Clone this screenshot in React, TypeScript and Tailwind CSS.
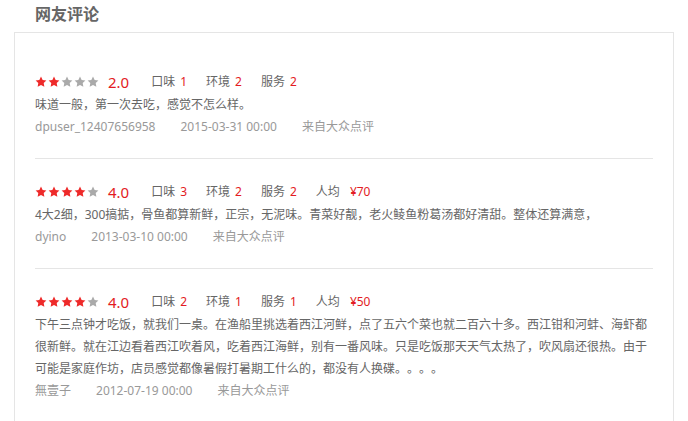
const REVIEWS = [
  {
    stars: 2,
    score: "2.0",
    taste: 1,
    env: 2,
    service: 2,
    price: null as string | null,
    text: "味道一般，第一次去吃，感觉不怎么样。",
    user: "dpuser_12407656958",
    date: "2015-03-31 00:00",
  },
  {
    stars: 4,
    score: "4.0",
    taste: 3,
    env: 2,
    service: 2,
    price: "¥70",
    text: "4大2细，300搞掂，骨鱼都算新鲜，正宗，无泥味。青菜好靓，老火鲮鱼粉葛汤都好清甜。整体还算满意，",
    user: "dyino",
    date: "2013-03-10 00:00",
  },
  {
    stars: 4,
    score: "4.0",
    taste: 2,
    env: 1,
    service: 1,
    price: "¥50",
    text: "下午三点钟才吃饭，就我们一桌。在渔船里挑选着西江河鲜，点了五六个菜也就二百六十多。西江钳和河蚌、海虾都很新鲜。就在江边看着西江吹着风，吃着西江海鲜，别有一番风味。只是吃饭那天天气太热了，吹风扇还很热。由于可能是家庭作坊，店员感觉都像暑假打暑期工什么的，都没有人换碟。。。。",
    user: "無壹子",
    date: "2012-07-19 00:00",
  },
];

function Stars({ count }: { count: number }) {
  return (
    <div className="flex gap-[1px]">
      {[0, 1, 2, 3, 4].map((i) => (
        <svg
          key={i}
          viewBox="0 0 24 24"
          className={`w-3 h-3 ${i < count ? "fill-[#ee2a2a]" : "fill-[#aaaaaa]"}`}
        >
          <path d="M12 1l3.3 6.8 7.5 1-5.4 5.2 1.3 7.4L12 17.9l-6.7 3.5 1.3-7.4L1.2 8.8l7.5-1z" />
        </svg>
      ))}
    </div>
  );
}

export default function App() {
  return (
    <div className="min-h-screen bg-white font-['Noto_Sans','Noto_Sans_CJK_SC',sans-serif] px-[14px] [text-spacing-trim:space-all]">
      <h2 className="pl-[21px] text-[16px] leading-[28px] font-bold text-[#666]">网友评论</h2>
      <div className="mt-1 border border-[#e5e5e5] px-5 pt-4">
        {REVIEWS.map((r, i) => (
          <div
            key={i}
            className={`pt-[21px] pb-5 ${i < REVIEWS.length - 1 ? "border-b border-[#e5e5e5]" : ""}`}
          >
            <div className="flex items-center h-6 text-[12px] text-[#666]">
              <Stars count={r.stars} />
              <span className="ml-[9px] text-[15px] text-[#e31b23]">{r.score}</span>
              <div className="ml-[22px] flex gap-[19px]">
                <span>
                  口味<span className="ml-[5px] text-[#e31b23]">{r.taste}</span>
                </span>
                <span>
                  环境<span className="ml-[5px] text-[#e31b23]">{r.env}</span>
                </span>
                <span>
                  服务<span className="ml-[5px] text-[#e31b23]">{r.service}</span>
                </span>
                {r.price && (
                  <span>
                    人均<span className="ml-[10px] text-[#e31b23]">{r.price}</span>
                  </span>
                )}
              </div>
            </div>
            <p className="text-[12px] leading-[22px] text-[#666]">{r.text}</p>
            <div className="flex gap-[25px] text-[12px] leading-[22px] text-[#999]">
              <span>{r.user}</span>
              <span>{r.date}</span>
              <span>来自大众点评</span>
            </div>
          </div>
        ))}
      </div>
    </div>
  );
}
